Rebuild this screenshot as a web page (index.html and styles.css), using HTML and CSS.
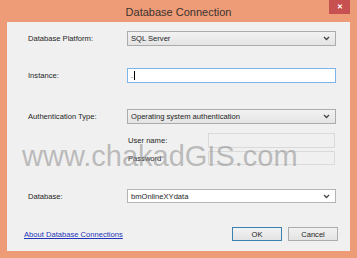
FILE: index.html
```html
<!DOCTYPE html>
<html lang="en">
<head>
    <meta charset="UTF-8">
    <title>Database Connection</title>
    <link rel="stylesheet" href="styles.css">
</head>
<body>
    <div class="window">
        <div class="titlebar">
            <span class="title">Database Connection</span>
            <span class="close">&#x2715;</span>
        </div>

        <div class="panel">
            <div class="row row-platform">
                <span class="label">Database Platform:</span>
                <div class="combo"><span>SQL Server</span>
                    <svg class="chev" width="7" height="5" viewBox="0 0 7 5"><path d="M1 1 L3.5 3.5 L6 1" fill="none" stroke="#444" stroke-width="1.3"/></svg>
                </div>
            </div>

            <div class="row row-instance">
                <span class="label">Instance:</span>
                <div class="field focused">.<span class="caret"></span></div>
            </div>

            <div class="row row-auth">
                <span class="label">Authentication Type:</span>
                <div class="combo"><span>Operating system authentication</span>
                    <svg class="chev" width="7" height="5" viewBox="0 0 7 5"><path d="M1 1 L3.5 3.5 L6 1" fill="none" stroke="#444" stroke-width="1.3"/></svg>
                </div>
            </div>

            <div class="sub-row row-user">
                <span class="sub-label">User name:</span>
                <div class="field disabled"></div>
            </div>
            <div class="sub-row row-pass">
                <span class="sub-label">Password</span>
                <div class="field disabled"></div>
            </div>

            <div class="row row-db">
                <span class="label">Database:</span>
                <div class="combo white"><span>bmOnlineXYdata</span>
                    <svg class="chev" width="7" height="5" viewBox="0 0 7 5"><path d="M1 1 L3.5 3.5 L6 1" fill="none" stroke="#444" stroke-width="1.3"/></svg>
                </div>
            </div>

            <div class="footer">
                <a class="help-link" href="#">About Database Connections</a>
                <div class="buttons">
                    <span class="btn default">OK</span>
                    <span class="btn">Cancel</span>
                </div>
            </div>
        </div>

        <!-- watermark over the dialog -->
        <div class="watermark">www.chakadGIS.com</div>
    </div>
</body>
</html>
```

FILE: styles.css
```css
* { margin: 0; padding: 0; box-sizing: border-box; }
body {
    font-family: 'Liberation Sans', Arial, sans-serif;
    background: #fff;
}

.window {
    position: relative;
    width: 357px;
    height: 258px;
    background: #ee9b77;
    overflow: hidden;
}

/* Title bar */
.titlebar {
    position: relative;
    height: 22px;
    display: flex;
    align-items: center;
    justify-content: center;
}
.title { font-size: 11px; color: #3b3330; padding-top: 1px; }
.close {
    position: absolute;
    top: 0;
    right: 7px;
    width: 21px;
    height: 14px;
    background: #c75050;
    color: #fff;
    font-size: 7px;
    font-weight: bold;
    display: flex;
    align-items: center;
    justify-content: center;
}

/* Content */
.panel {
    margin: 0 7px;
    height: 229px;
    background: #f0f0f0;
    padding: 9px 0 0 21px;
    font-size: 7.6px;
    color: #1e1e1e;
}
.row { display: flex; align-items: center; height: 15px; }
.label { width: 99px; }
.row-instance { margin-top: 22px; }
.row-auth { margin-top: 26px; }
.row-db { margin-top: 24px; height: 14px; }

.combo, .field {
    width: 209px;
    height: 100%;
    border: 1px solid #acacac;
    display: flex;
    align-items: center;
    padding-left: 3px;
}
.combo {
    justify-content: space-between;
    padding-right: 5px;
    background: linear-gradient(#f2f2f2, #e4e4e4);
}
.combo.white { background: #fff; border-color: #b4b4b4; }
.chev { flex-shrink: 0; }

.field { background: #fff; }
.field.focused { border-color: #7eb4ea; }
.caret { display: inline-block; width: 1px; height: 9px; background: #000; margin-left: 1px; }

.sub-row { display: flex; align-items: center; height: 15px; padding-left: 100px; }
.row-user { margin-top: 9px; }
.row-pass { margin-top: 3px; height: 14px; }
.sub-label { width: 80px; }
.sub-row .field { width: 127px; }
.field.disabled { background: #f0f0f0; border-color: #dadada; }

.footer {
    display: flex;
    align-items: center;
    justify-content: space-between;
    margin: 24px 12px 0 -4px;
    height: 14px;
}
.help-link { color: #2234b8; text-decoration: underline; }
.buttons { display: flex; gap: 6px; height: 100%; }
.btn {
    width: 50px;
    height: 100%;
    display: flex;
    align-items: center;
    justify-content: center;
    border: 1px solid #acacac;
    background: linear-gradient(#f2f2f2, #e3e3e3);
}
.btn.default { border-color: #3c7fb1; }

.watermark {
    position: absolute;
    left: 22px;
    top: 142px;
    font-size: 29px;
    line-height: 28px;
    color: rgba(150, 150, 150, 0.6);
    white-space: nowrap;
}
```
